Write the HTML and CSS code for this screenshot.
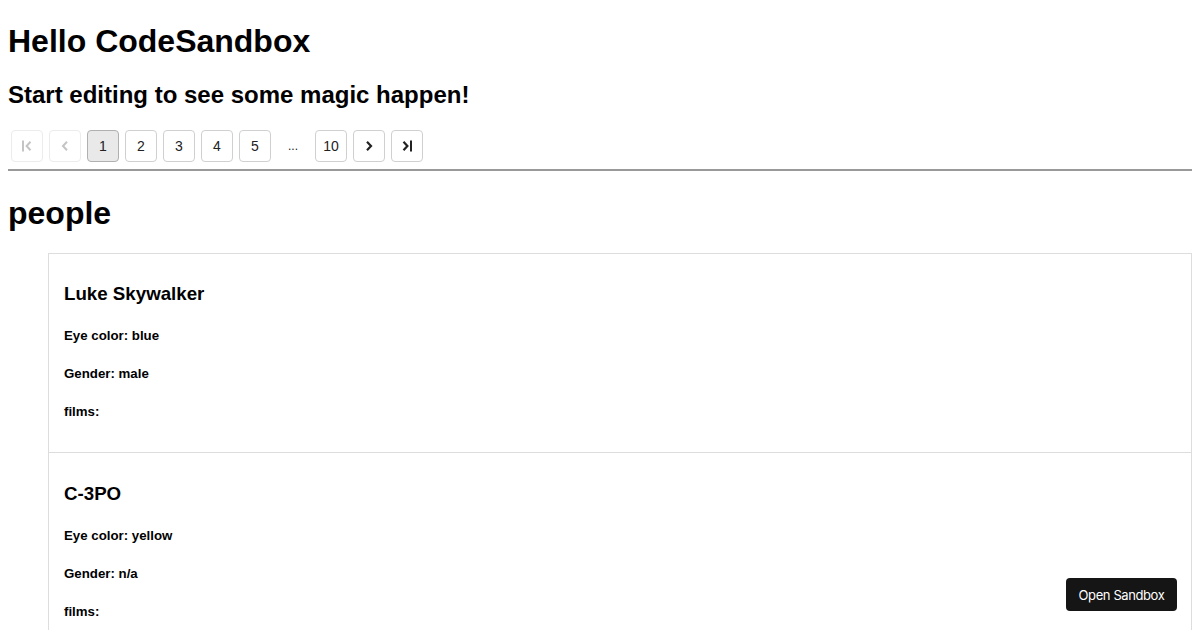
FILE: index.html
```html
<!DOCTYPE html>
<html>
<head>
<meta charset="utf-8">
<link rel="stylesheet" href="styles.css">
</head>
<body>
<h1 class="title">Hello CodeSandbox</h1>
<h2 class="subtitle">Start editing to see some magic happen!</h2>
<ul class="pager">
  <li class="pg disabled"><svg width="14" height="14" viewBox="0 0 14 14"><path d="M3 1.5v11" stroke="currentColor" stroke-width="2" fill="none"/><path d="M10.5 2.8L6.6 7l3.9 4.2" stroke="currentColor" stroke-width="2" fill="none"/></svg></li>
  <li class="pg disabled"><svg width="14" height="14" viewBox="0 0 14 14"><path d="M9 2.8L5 7l4 4.2" stroke="currentColor" stroke-width="2" fill="none"/></svg></li>
  <li class="pg active">1</li>
  <li class="pg">2</li>
  <li class="pg">3</li>
  <li class="pg">4</li>
  <li class="pg">5</li>
  <li class="pg ellipsis">...</li>
  <li class="pg">10</li>
  <li class="pg"><svg width="14" height="14" viewBox="0 0 14 14"><path d="M5 2.8L9 7l-4 4.2" stroke="currentColor" stroke-width="2.2" fill="none"/></svg></li>
  <li class="pg"><svg width="14" height="14" viewBox="0 0 14 14"><path d="M3.5 2.8L7.4 7l-3.9 4.2" stroke="currentColor" stroke-width="2.2" fill="none"/><path d="M11 1.5v11" stroke="currentColor" stroke-width="2" fill="none"/></svg></li>
</ul>
<hr class="rule">
<h1 class="title people">people</h1>
<ul class="cards">
  <li class="card">
    <h3 class="name">Luke Skywalker</h3>
    <h5 class="field">Eye color: blue</h5>
    <h5 class="field">Gender: male</h5>
    <h5 class="field">films:</h5>
  </li>
  <li class="card">
    <h3 class="name">C-3PO</h3>
    <h5 class="field">Eye color: yellow</h5>
    <h5 class="field">Gender: n/a</h5>
    <h5 class="field">films:</h5>
  </li>
</ul>
<a class="open-btn">Open Sandbox</a>
</body>
</html>
```
FILE: styles.css
```css
body {
  margin: 8px;
  font-family: "Liberation Sans", Arial, sans-serif;
  color: #000;
  background: #fff;
}
.title {
  font-size: 32px;
  margin: 14.5px 0 21.44px;
}
.title.people {
  margin: 24.5px 0 0;
}
.subtitle {
  font-size: 24px;
  margin: 21px 0 18px;
}
.pager {
  list-style: none;
  margin: 0;
  padding: 0;
  display: flex;
}
.pg {
  width: 32px;
  height: 32px;
  box-sizing: border-box;
  margin: 3px;
  border: 1px solid #d0d0d0;
  border-radius: 4px;
  display: flex;
  align-items: center;
  justify-content: center;
  font-size: 14px;
  color: #222;
}
.pg.disabled {
  color: #c4c4c4;
  border-color: #ececec;
}
.pg.active {
  background: #e9e9e9;
  border-color: #b0b0b0;
}
.pg.ellipsis {
  border-color: transparent;
  font-size: 12px;
}
.rule {
  margin: 4px 0 0;
  border: none;
  border-top: 2px solid #999;
  height: 0;
}
.cards {
  list-style: none;
  margin: 20.5px 0 0;
  padding: 0 0 0 40px;
}
.card {
  border: 1px solid #ddd;
  padding: 10px 15px 10px;
}
.card + .card {
  border-top: none;
  padding-top: 12px;
}
.name {
  font-size: 18.72px;
  margin: 18.72px 0;
}
.field {
  font-size: 13.28px;
  margin: 23px 0;
}
.open-btn {
  position: fixed;
  right: 23px;
  bottom: 19px;
  width: 111px;
  height: 33px;
  box-sizing: border-box;
  background: #151515;
  color: #fff;
  border-radius: 4px;
  font-family: Inter, "Liberation Sans", sans-serif;
  font-size: 13px;
  display: flex;
  align-items: center;
  justify-content: center;
  letter-spacing: -0.4px;
}
```
